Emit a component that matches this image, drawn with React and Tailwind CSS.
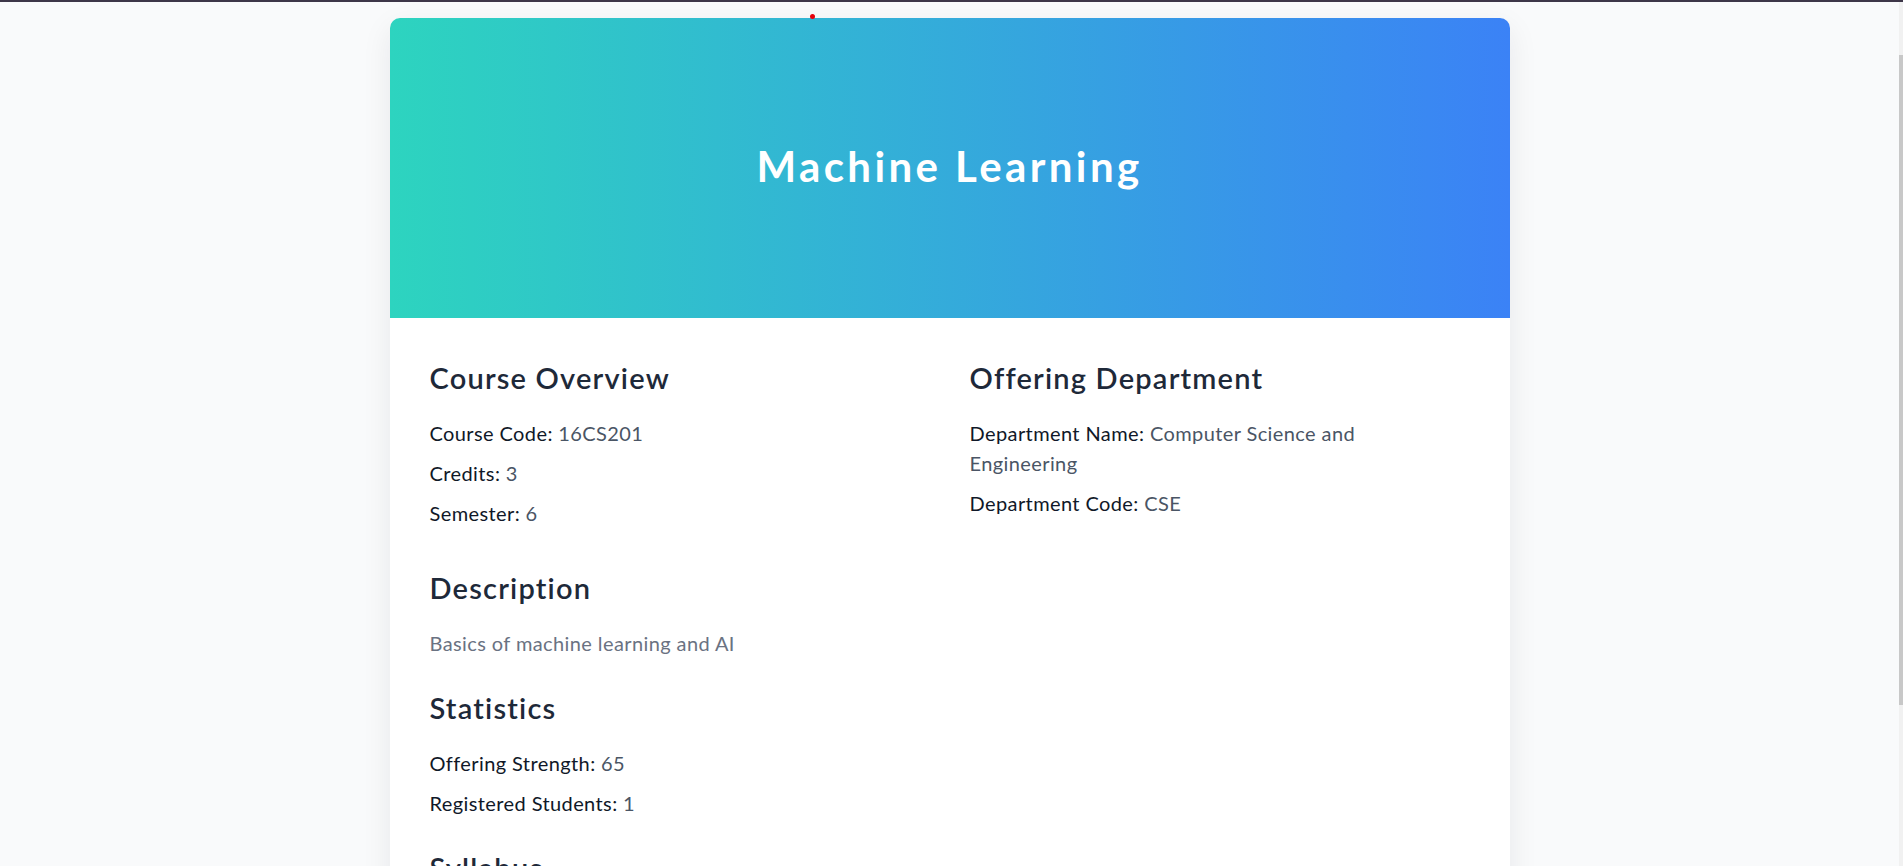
import React from 'react';

export default function App() {
  // Course data shown on the page
  const course = {
    title: 'Machine Learning',
    code: '16CS201',
    credits: 3,
    semester: 6,
    description: 'Basics of machine learning and AI',
    department: { name: 'Computer Science and Engineering', code: 'CSE' },
    strength: 65,
    registered: 1,
  };

  const Field = ({ label, value, className = '' }) => (
    <p className={`text-[20px] leading-[30px] tracking-[0.4px] ${className}`}>
      <span className="text-gray-900">{label}: </span>
      <span className="text-gray-600">{value}</span>
    </p>
  );

  return (
    <div
      className="h-screen overflow-hidden flex flex-col bg-gray-50"
      style={{ fontFamily: 'Lato, "Open Sans", sans-serif' }}
    >
      {/* top strip */}
      <div className="h-[2px] bg-[#3d3648] shrink-0"></div>

      <div className="flex flex-1 min-h-0">
        <main className="flex-1 overflow-hidden pt-4">
          <div className="relative mx-auto w-[1120px] bg-white rounded-[10px] shadow-[0_10px_30px_rgba(15,23,42,0.08)]">
            <div className="absolute -top-[4px] left-[420px] w-[5px] h-[5px] rounded-full bg-red-600"></div>

            {/* Header banner */}
            <header className="h-[300px] rounded-t-[10px] bg-[linear-gradient(to_right,#2dd4bf,#3b82f6)] flex items-center justify-center pb-[4px]">
              <h1 className="text-white font-bold text-[42px] leading-none tracking-[3.4px]">
                {course.title}
              </h1>
            </header>

            {/* Body */}
            <div className="px-10 pt-[42px] pb-16">
              <div className="grid grid-cols-2 gap-x-10">
                <section>
                  <h2 className="text-[29px] leading-[36px] font-semibold text-gray-800 tracking-[1.2px] mb-[22px]">
                    Course Overview
                  </h2>
                  <Field label="Course Code" value={course.code} className="mb-[10px]" />
                  <Field label="Credits" value={course.credits} className="mb-[10px]" />
                  <Field label="Semester" value={course.semester} className="mb-[10px]" />
                </section>

                <section>
                  <h2 className="text-[29px] leading-[36px] font-semibold text-gray-800 tracking-[1.2px] mb-[22px]">
                    Offering Department
                  </h2>
                  <Field label="Department Name" value={course.department.name} className="mb-[10px] max-w-[470px]" />
                  <Field label="Department Code" value={course.department.code} className="mb-[10px]" />
                </section>
              </div>

              <section className="mt-8">
                <h2 className="text-[29px] leading-[36px] font-semibold text-gray-800 tracking-[1.2px] mb-[22px]">
                  Description
                </h2>
                <p className="text-[20px] leading-[30px] tracking-[0.4px] text-gray-500">{course.description}</p>
              </section>

              <section className="mt-8">
                <h2 className="text-[29px] leading-[36px] font-semibold text-gray-800 tracking-[1.2px] mb-[22px]">
                  Statistics
                </h2>
                <div className="flex flex-col gap-[10px]">
                  <Field label="Offering Strength" value={course.strength} />
                  <Field label="Registered Students" value={course.registered} />
                </div>
              </section>

              <section className="mt-8">
                <h2 className="text-[29px] leading-[36px] font-semibold text-gray-800 tracking-[1.2px] mb-[22px]">
                  Syllabus
                </h2>
                <p className="text-[20px] leading-[30px] tracking-[0.4px] text-gray-600">
                  Introduction, supervised learning, unsupervised learning, neural networks
                </p>
              </section>
            </div>
          </div>
        </main>

        {/* thin scrollbar */}
        <div className="w-[4px] shrink-0 bg-[#f1f1f1] flex flex-col">
          <div className="mt-[53px] h-[650px] bg-[#c8c8c8]"></div>
        </div>
      </div>
    </div>
  );
}
